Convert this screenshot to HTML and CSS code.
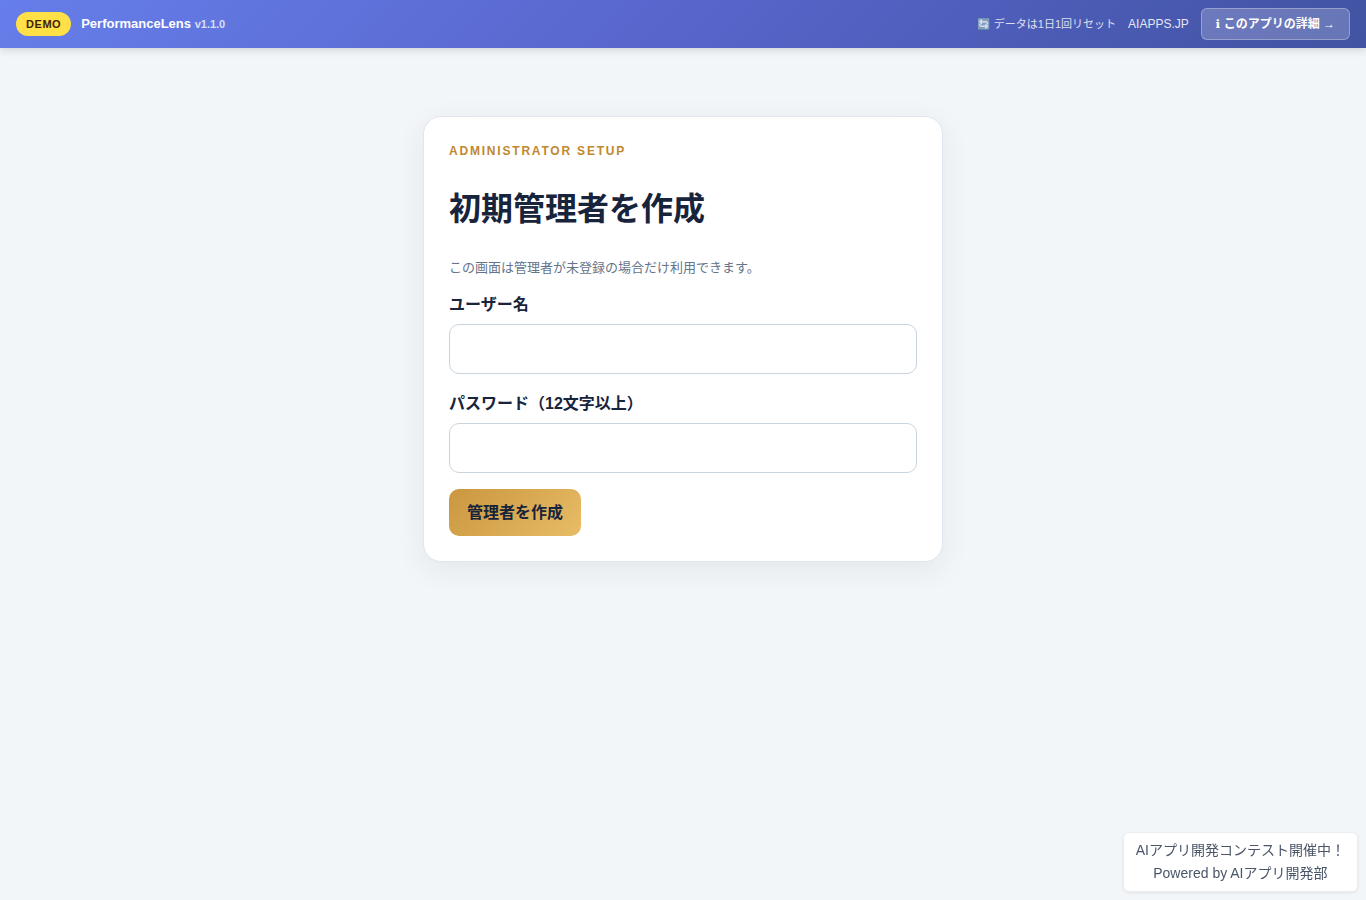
FILE: index.html
```html
<!DOCTYPE html>
<html lang="ja">
<head>
  <meta charset="UTF-8">
  <meta name="viewport" content="width=device-width, initial-scale=1.0">
  <title>PerformanceLens</title>
  <link rel="stylesheet" href="styles.css">
</head>
<body>
  <header class="demo-bar">
    <div class="demo-left">
      <span class="demo-badge">DEMO</span>
      <span class="demo-name">PerformanceLens <small>v1.1.0</small></span>
    </div>
    <div class="demo-right">
      <span class="demo-reset">🔄 データは1日1回リセット</span>
      <a class="demo-site" href="#">AIAPPS.JP</a>
      <a class="demo-detail" href="#"><span class="info">ℹ</span> このアプリの詳細 →</a>
    </div>
  </header>

  <main class="auth-page">
    <section class="card">
      <p class="eyebrow">ADMINISTRATOR SETUP</p>
      <h1>初期管理者を作成</h1>
      <p class="muted">この画面は管理者が未登録の場合だけ利用できます。</p>
      <form class="auth-form">
        <label for="username">ユーザー名</label>
        <input type="text" id="username" name="username">
        <label for="password">パスワード（12文字以上）</label>
        <input type="password" id="password" name="password">
        <button type="button">管理者を作成</button>
      </form>
    </section>
  </main>

  <aside class="powered">
    <a href="#">AIアプリ開発コンテスト開催中！</a>
    <a href="#">Powered by AIアプリ開発部</a>
  </aside>
</body>
</html>
```
FILE: styles.css
```css
* {
  box-sizing: border-box;
}

body {
  margin: 0;
  min-height: 100vh;
  background: #f2f6f9;
  color: #17243b;
  font-family: "Liberation Sans", "Noto Sans CJK JP", sans-serif;
  font-size: 16px;
  line-height: 24px;
}

a {
  color: inherit;
  text-decoration: none;
}

.demo-bar {
  display: flex;
  align-items: center;
  justify-content: space-between;
  height: 48px;
  padding: 0 16px;
  background: linear-gradient(135deg, #667eea 0%, #5865cb 50%, #4153a2 100%);
  box-shadow: 0 2px 8px rgba(0, 0, 0, 0.15);
  color: #fff;
  font-size: 13px;
}

.demo-left {
  display: flex;
  align-items: center;
  gap: 10px;
}

.demo-right {
  display: flex;
  align-items: center;
  gap: 12px;
}

.demo-badge {
  padding: 4px 10px;
  border-radius: 12px;
  background: #ffe047;
  color: #422006;
  font-size: 11px;
  font-weight: 700;
  line-height: 16px;
  letter-spacing: 0.05em;
}

.demo-name {
  font-weight: 700;
}

.demo-name small {
  font-size: 11px;
  opacity: 0.75;
}

.demo-reset {
  font-size: 11px;
  opacity: 0.8;
}

.demo-site {
  font-size: 12px;
  opacity: 0.85;
}

.demo-detail {
  padding: 3px 14px;
  border: 1px solid rgba(255, 255, 255, 0.3);
  border-radius: 6px;
  background: rgba(255, 255, 255, 0.2);
  font-size: 12px;
  font-weight: 700;
}

.info {
  font-family: "DejaVu Sans", sans-serif;
}

.auth-page {
  padding: 68px 16px;
}

.card {
  max-width: 520px;
  margin: 0 auto;
  padding: 25px;
  border: 1px solid #dfe6ed;
  border-radius: 18px;
  background: #fff;
  box-shadow: 0 8px 30px rgba(23, 36, 40, 0.07);
}

.eyebrow {
  margin: 0;
  color: #c0882e;
  font-size: 12px;
  font-weight: 700;
  line-height: 18px;
  letter-spacing: 0.15em;
}

h1 {
  margin: 24px 0;
  font-size: 32px;
  line-height: 50px;
}

.muted {
  margin: 0 0 13px;
  color: #64748b;
  font-size: 13px;
  line-height: 20px;
}

.auth-form {
  display: flex;
  flex-direction: column;
}

.auth-form label {
  margin-bottom: 6px;
  font-weight: 700;
  line-height: 27px;
}

.auth-form input {
  width: 100%;
  height: 50px;
  margin-bottom: 16px;
  padding: 12px;
  border: 1px solid #c9d4df;
  border-radius: 10px;
  background: #fff;
  font: inherit;
}

.auth-form button {
  align-self: flex-start;
  padding: 11px 18px;
  border: 0;
  border-radius: 10px;
  background: linear-gradient(135deg, #c9973f, #e8bc66);
  color: #17243b;
  font: inherit;
  font-weight: 700;
  line-height: 25px;
  cursor: pointer;
}

.powered {
  position: fixed;
  right: 8px;
  bottom: 8px;
  display: flex;
  flex-direction: column;
  padding: 6px 12px;
  border: 1px solid #e9edf1;
  border-radius: 6px;
  background: #fff;
  box-shadow: 0 1px 3px rgba(0, 0, 0, 0.08);
  color: #4a5568;
  font-size: 14px;
  line-height: 23px;
  text-align: center;
}
```
